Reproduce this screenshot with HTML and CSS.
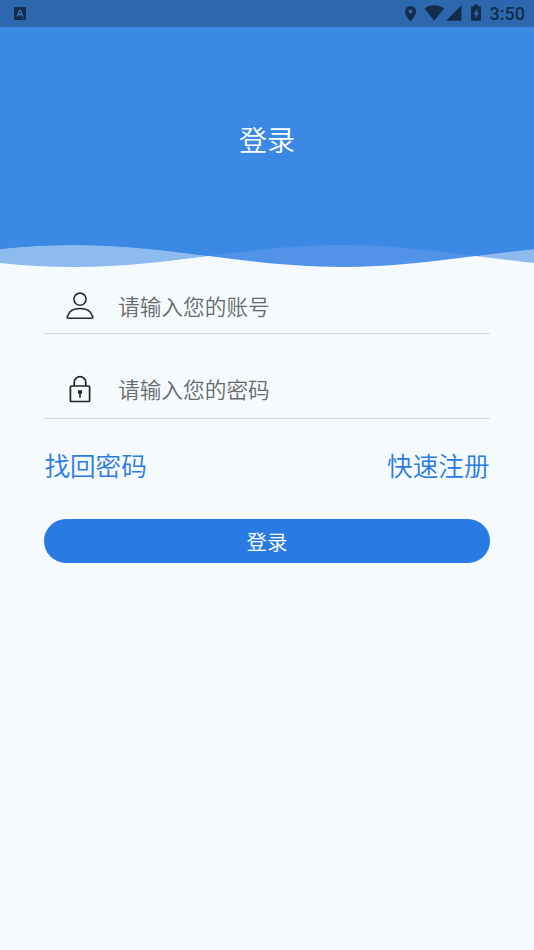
FILE: index.html
```html
<!DOCTYPE html>
<html lang="zh-CN">
<head>
<meta charset="utf-8">
<title>登录</title>
<link rel="stylesheet" href="styles.css">
</head>
<body>
<header class="status">
  <svg class="app" width="12" height="13" viewBox="0 0 12 13"><rect width="12" height="13" rx="1" fill="#132c4c"/><path d="M3.300 9.500 5.500 3.500h1L8.700 9.500M4.300 7.500h3.400" fill="none" stroke="#3973b8" stroke-width="1.300"/><path d="M6.500 11.500h4" stroke="#2b558a" stroke-width=".7"/></svg>
  <svg class="indicators" width="90" height="22" viewBox="0 0 90 22" fill="#132c4c">
    <path fill-rule="evenodd" d="M10.500 6a5.500 5.500 0 0 0-5.500 5.500c0 4 5.500 10 5.500 10s5.500-6 5.500-10a5.500 5.500 0 0 0-5.500-5.500zm0 3.600a2 2 0 1 1 0 4 2 2 0 0 1 0-4z"/>
    <path d="M24.500 8.500C30.200 4.100 38.200 4.100 44 8.500L34.200 20.700z"/>
    <path d="M61.500 5.200v15.500H46z"/>
    <path fill-rule="evenodd" d="M74 4.500h4v1.700h3V20.700H71V6.200h3zm3.200 4-3.700 6h2.100v4l3.500-6H77.200z"/>
  </svg>
  <span class="clock">3:50</span>
</header>
<section class="hero">
  <h1>登录</h1>
  <svg class="wave" width="534" height="24" viewBox="-1 244 534 24">
    <path fill="#8dbaef" d="M-59.500 256C-16 261.640 25.700 267 74 267S164 261.640 207.500 256C251 250.360 292.700 245 341 245S431 250.360 474.500 256C518 261.640 559.700 267 608 267V244H-59.500z"/>
    <path fill="#5093e8" d="M-59.500 256C-16 250.360 25.700 245 74 245S164 250.360 207.500 256C251 261.640 292.700 267 341 267S431 261.640 474.500 256C518 250.360 559.700 245 608 245V244H-59.500z"/>
    <path fill="#3b89e5" d="M-59.500 256C-16 250.360 25.700 245 74 245S164 250.360 207.500 256C251 250.360 292.700 245 341 245S431 250.360 474.500 256C518 250.360 559.700 245 608 245V244H-59.500z"/>
  </svg>
</section>
<main class="form">
  <label class="field account">
    <svg width="28" height="28" viewBox="0 0 28 28" fill="none" stroke="#282b2d" stroke-width="1.600"><circle cx="14" cy="7.200" r="6.100"/><path d="M2.200 26.200C.9 26.200 1.100 25.400 1.400 24.300 3 19 8 16.500 14 16.500s11 2.500 12.600 7.800c.3 1.100.5 1.900-.8 1.900z"/></svg>
    <input type="text" placeholder="请输入您的账号">
  </label>
  <label class="field password">
    <svg width="28" height="28" viewBox="0 0 28 28" fill="none" stroke="#222527" stroke-width="1.700"><rect x="4.400" y="11" width="19.200" height="15.500" rx="1"/><path d="M8.200 11V7.400a5.800 5.800 0 0 1 11.600 0V11"/><path d="M12 15.200h4v3.500h-1.200v4h-1.600v-4H12z" fill="#222527" stroke="none"/></svg>
    <input type="password" placeholder="请输入您的密码">
  </label>
  <nav class="links"><a>找回密码</a><a>快速注册</a></nav>
  <button class="submit" type="button">登录</button>
</main>
</body>
</html>
```
FILE: styles.css
```css
* { box-sizing: border-box; }
body {
  margin: 0;
  min-height: 950px;
  background: #f5fafd;
  font-family: Roboto, "Noto Sans CJK SC", sans-serif;
}
.status {
  display: flex;
  height: 27px;
  padding: 0 9px 0 14px;
  background: #2d67ad;
  color: #132c4c;
}
.app { margin-top: 7px; }
.indicators { margin-left: auto; margin-right: -1px; }
.clock {
  width: 36px;
  padding-left: .5px;
  font-size: 18px;
  font-weight: 500;
  line-height: 28px;
  white-space: nowrap;
}
.hero {
  display: flex;
  flex-direction: column;
  height: 241px;
}
.hero h1 {
  margin: 0;
  height: 217px;
  padding-top: 94px;
  background: #3b89e5;
  color: #fff;
  font-size: 28px;
  font-weight: 350;
  line-height: 42px;
  text-align: center;
}
.wave { display: block; flex: none; }
.form { padding: 0 44.5px 0 44.4px; }
.field {
  display: flex;
  align-items: center;
  padding-left: 21.6px;
  border-bottom: 1.500px solid #d2d6d9;
}
.field svg { flex: none; }
.account { height: 66px; padding-top: 10px; }
.password { height: 85px; padding-top: 25px; }
.password svg { margin-top: 1px; }
.field input {
  width: 340px;
  height: 36px;
  margin-left: 24px;
  padding: 0;
  border: 0;
  outline: 0;
  background: none;
  font: 350 21.700px "Noto Sans CJK SC", sans-serif;
}
.field input::placeholder { color: #666a6c; opacity: 1; }
.links {
  display: flex;
  justify-content: space-between;
  height: 100px;
  padding-top: 28px;
  color: #297be3;
  font-size: 25.600px;
  font-weight: 350;
  line-height: 40px;
}
.submit {
  display: block;
  width: 100%;
  height: 44px;
  padding: 0;
  border: 0;
  border-radius: 22px;
  background: #297be3;
  color: #fff;
  font: 350 20.400px/44px "Noto Sans CJK SC", sans-serif;
}
```
